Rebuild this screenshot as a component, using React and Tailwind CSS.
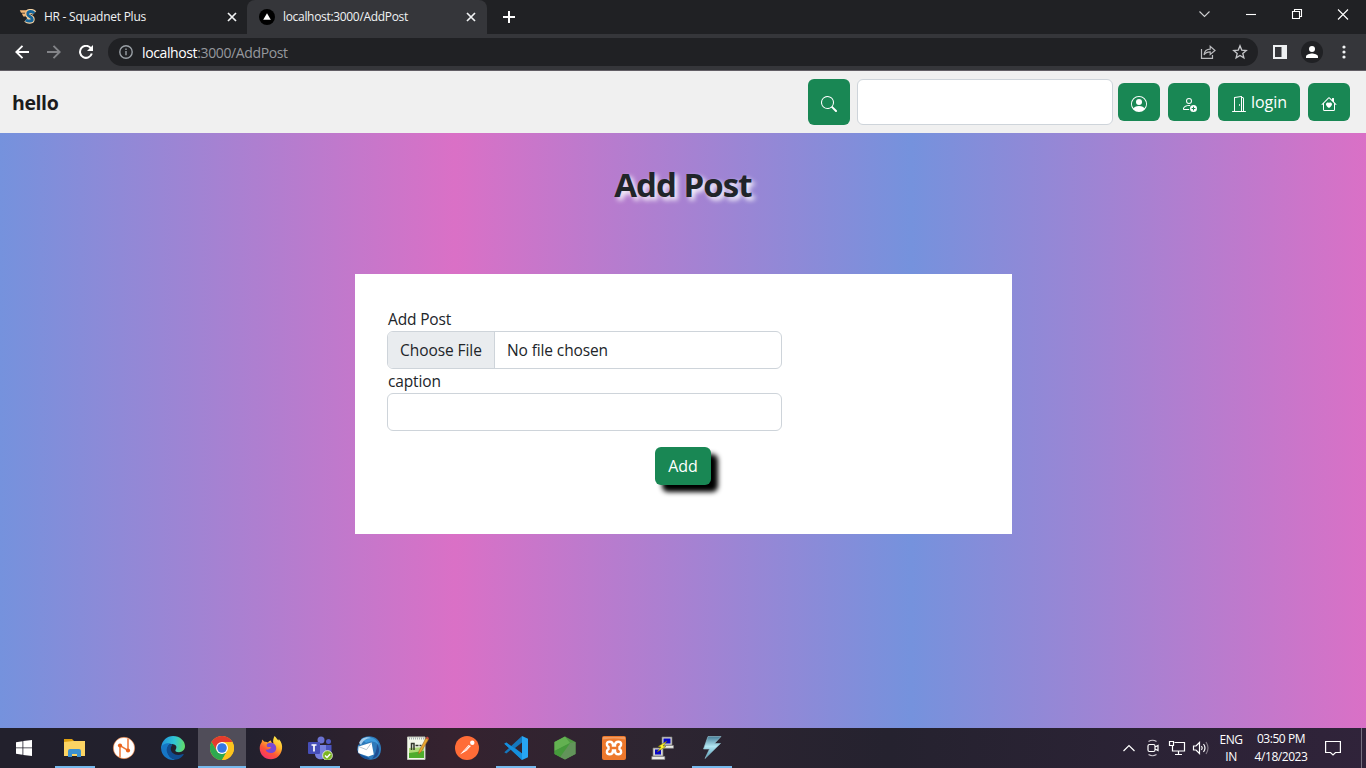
import React from "react";
import { BsSearch, BsPersonCircle, BsPersonAdd, BsDoorOpen, BsHouseHeart } from "react-icons/bs";

const GREEN_BTN = "flex h-[38px] items-center justify-center rounded-md bg-[#198754] text-white";

function Cross({ className }) {
  return (
    <svg viewBox="0 0 10 10" className={className} fill="none" stroke="currentColor" strokeWidth="1.7">
      <path d="M1 1l8 8M9 1L1 9" />
    </svg>
  );
}

function TabStrip() {
  return (
    <div className="flex h-[34px] bg-[#202124] text-[12px] text-[#f1f3f4]">
      <div className="flex w-[247px] items-center rounded-br-lg pl-[19px]">
        <svg viewBox="0 0 18 16" className="h-4 w-[18px] shrink-0">
          <path d="M15.500 4C13 1.600 8.500 1.800 8.500 5C8.500 8.200 13.200 7.200 13.200 10.200C13.200 12.700 9.200 12.800 6.800 10.900" fill="none" stroke="#f5d3a4" strokeWidth="5" />
          <path d="M15.300 4.200C13 1.800 8.700 2 8.700 5C8.700 8.200 13.200 7.200 13.200 10.200C13.200 12.700 9.200 12.500 6.800 10.900" fill="none" stroke="#15659b" strokeWidth="3" />
          <path d="M.8 1.300H9L7 3.800H2zM2.800 4.500H7.500L6.500 7.500H4.300z" fill="#f3b877" />
        </svg>
        <span className="ml-[7px] w-[183px] tracking-[-0.25px]">HR - Squadnet Plus</span>
        <Cross className="h-[10px] w-[10px]" />
      </div>
      <div className="flex w-[240px] items-center rounded-t-lg bg-[#35363a] pl-[12px]">
        <svg viewBox="0 0 16 16" className="h-4 w-4 shrink-0">
          <circle cx="8" cy="8" r="8" fill="#000" />
          <path d="M8 4.300L11.800 10.800H4.200z" fill="#fff" />
        </svg>
        <span className="ml-2 w-[183px] tracking-[-0.32px]">localhost:3000/AddPost</span>
        <Cross className="h-[10px] w-[10px]" />
      </div>
      <div className="flex flex-1 items-center">
        <svg viewBox="0 0 12 12" className="ml-4 h-3 w-3" fill="none" stroke="#fff" strokeWidth="2">
          <path d="M6 0v12M0 6h12" />
        </svg>
        <svg viewBox="0 0 150 12" className="mr-[17px] mb-[6px] ml-auto h-3 w-[150px]" fill="none" stroke="#fff" strokeWidth="1.100">
          <path d="M.5 3.500L5.500 8.500L10.500 3.500" stroke="#d0d1d3" />
          <path d="M47 6.500h10" />
          <path d="M93.500 3.500h7v7h-7zM95.500 3.500v-2h7v7h-2" />
          <path d="M139 1.500l10 10M149 1.500l-10 10" />
        </svg>
      </div>
    </div>
  );
}

function Toolbar() {
  return (
    <div className="flex h-[37px] items-start border-b border-[#625e65] bg-[#35363a] pt-1">
      <div className="flex h-7 items-center pl-[15px]">
        <svg viewBox="0 0 14 14" className="h-[14px] w-[14px]" fill="none" stroke="#fff" strokeWidth="1.900">
          <path d="M14 7H1.500M7.500 .8L1.300 7L7.500 13.200" />
        </svg>
        <svg viewBox="0 0 14 14" className="ml-[18px] h-[14px] w-[14px]" fill="none" stroke="#838488" strokeWidth="1.900">
          <path d="M0 7H12.500M6.500 .8L12.700 7L6.500 13.200" />
        </svg>
        <svg viewBox="0 0 14 14" className="ml-[18px] h-[14px] w-[14px]" fill="none" stroke="#fff" strokeWidth="2">
          <path d="M11.800 3.200A6 6 0 1 0 12.800 8.500" />
          <path d="M14 0V6H8z" fill="#fff" stroke="none" />
        </svg>
      </div>
      <div className="ml-[15px] flex h-7 w-[1150px] items-center rounded-full bg-[#202124] pl-[11px]">
        <svg viewBox="0 0 14 14" className="h-[14px] w-[14px]" fill="none" stroke="#9aa0a6" strokeWidth="1.400">
          <circle cx="7" cy="7" r="6.200" />
          <path d="M7 6v4.300M7 3.500v1.500" />
        </svg>
        <span className="ml-[9px] text-[14px] tracking-[-0.38px] text-[#95989d]">
          <span className="text-white">localhost</span>:3000/AddPost
        </span>
        <svg viewBox="0 0 16 14" className="ml-auto h-[14px] w-4" fill="none" stroke="#b9babd" strokeWidth="1.200">
          <path d="M1.500 4V13.300H12.500V10" />
          <path d="M4 9.800C4.500 6 6.500 4.200 10.200 4.200V1.300L15 5.500L10.200 9.500V6.800C7.500 6.800 5.500 7.500 4 9.800z" />
        </svg>
        <svg viewBox="0 0 24 24" className="mr-[10px] ml-4 h-4 w-4" fill="none" stroke="#c5c6c9" strokeWidth="2">
          <path d="M12 2.800l2.600 6.300 6.800.6-5.200 4.500 1.600 6.700L12 17.300l-5.800 3.600 1.600-6.700L2.600 9.700l6.800-.6z" />
        </svg>
      </div>
      <div className="flex h-7 items-center">
        <svg viewBox="0 0 14 14" className="ml-[15px] h-[14px] w-[14px]">
          <path d="M0 0h14v14H0zM2 2v10h6.500V2z" fill="#eef0f2" fillRule="evenodd" />
        </svg>
        <svg viewBox="0 0 22 22" className="ml-[14px] h-[22px] w-[22px]">
          <circle cx="11" cy="11" r="11" fill="#202124" />
          <circle cx="11" cy="8" r="3" fill="#fff" />
          <path d="M5 17v-1.500c0-2 4-3 6-3s6 1 6 3V17z" fill="#fff" />
        </svg>
        <svg viewBox="0 0 4 14" className="ml-[19px] h-[14px] w-1" fill="#f1f3f4">
          <circle cx="2" cy="2" r="1.600" />
          <circle cx="2" cy="7" r="1.600" />
          <circle cx="2" cy="12" r="1.600" />
        </svg>
      </div>
    </div>
  );
}

function Navbar() {
  return (
    <header className="flex h-[62px] items-center bg-[#f0f0f0] pr-4 pl-3">
      <span className="pt-[2px] text-[19.500px] font-bold tracking-[-0.4px] text-[#1b1c1d]">hello</span>
      <button className="ml-auto flex h-[46px] w-[42px] items-center justify-center rounded-md bg-[#198754] text-white">
        <BsSearch className="mt-1 h-4 w-4" />
      </button>
      <input className="mr-[5px] ml-[7px] h-[46px] w-[256px] rounded-md border border-[#ced4da] bg-white" />
      <button className={`${GREEN_BTN} w-[42px]`}>
        <BsPersonCircle className="mt-1 h-4 w-4" />
      </button>
      <button className={`${GREEN_BTN} ml-2 w-[42px]`}>
        <BsPersonAdd className="mt-1 h-4 w-4" />
      </button>
      <button className={`${GREEN_BTN} ml-2 w-[82px] text-[16px]`}>
        <BsDoorOpen className="mt-1 h-4 w-4" />
        <span className="ml-1">login</span>
      </button>
      <button className={`${GREEN_BTN} ml-2 w-[42px]`}>
        <BsHouseHeart className="mt-1 h-4 w-4" />
      </button>
    </header>
  );
}

function PostForm() {
  return (
    <main className="flex h-[595px] flex-col items-center bg-[linear-gradient(to_right,#7592dd,#da70c6,#7592dd,#da70c6)] text-[#212529]">
      <h1 className="mt-[31px] text-[33px] leading-[42px] font-bold tracking-[-0.95px] [text-shadow:3px_3px_5px_white]">Add Post</h1>
      <form className="mt-[68px] ml-px flex h-[260px] w-[657px] flex-col bg-white px-8 pt-[33px] text-[15.500px] leading-6">
        <label className="h-6 pl-px tracking-[-0.15px]">Add Post</label>
        <div className="flex h-[38px] w-[395px] items-center overflow-hidden rounded-md border border-[#ced4da]">
          <span className="flex h-full w-[107px] items-center border-r border-[#ced4da] bg-[#e9ecef] pl-3 tracking-[-0.07px]">Choose File</span>
          <span className="ml-3 tracking-[-0.12px]">No file chosen</span>
        </div>
        <label className="h-6 pl-px tracking-[-0.15px]">caption</label>
        <input className="h-[38px] w-[395px] rounded-md border border-[#ced4da]" />
        <button type="button" className="mt-4 ml-[268px] h-[38px] w-14 rounded-md bg-[#198754] text-[16px] text-white shadow-[7px_7px_5px_black]">
          Add
        </button>
      </form>
    </main>
  );
}

function Explorer() {
  return (
    <svg viewBox="0 0 24 24" className="h-6 w-6">
      <path d="M1 3h8l2 2h11v3H1z" fill="#dfa00f" />
      <path d="M1 6l9-1h12v15H1z" fill="#fcd463" />
      <path d="M5 15q0-2 2-2h9q2 0 2 2v6h-4v-3H9v3H5z" fill="#3c91d0" />
    </svg>
  );
}

function NoteCircle() {
  return (
    <svg viewBox="0 0 24 24" className="h-6 w-6">
      <circle cx="12" cy="12" r="10.700" fill="#fff" stroke="#f4772c" strokeWidth=".6" />
      <path d="M8 21.500V9.500L16 14.500V2.500" fill="none" stroke="#ee7634" strokeWidth="1.500" />
      <circle cx="8" cy="9.500" r="2.100" fill="#ea631c" />
      <circle cx="16" cy="14.500" r="2.100" fill="#ea631c" />
    </svg>
  );
}

function Edge() {
  return (
    <svg viewBox="0 0 24 24" className="h-6 w-6">
      <defs>
        <linearGradient id="edgeTop" x1="0" y1=".4" x2="1" y2=".5">
          <stop offset="0" stopColor="#2193dc" />
          <stop offset=".55" stopColor="#30c6d5" />
          <stop offset="1" stopColor="#62dc68" />
        </linearGradient>
      </defs>
      <path d="M.2 11C1 4.500 6 0 12 0c7 0 12 5 12 10 0 4-3 6.200-6 6.200-3 0-4.200-1-3.500-2.200 2.500-4-.5-6-4-6C6 8 2.500 9.500.2 13z" fill="url(#edgeTop)" />
      <path d="M.1 12C1 8 6 6.500 10 7.700c-3 1-4 4-3.500 7 .6 5 4 8.300 8.500 8.800C8 25.500 0 20 .1 12z" fill="#1676c5" />
      <path d="M10.500 8c-4 1-5.500 4.500-4.500 8 1.500 5.500 6 7.800 9.500 7.500 3-.5 5.700-2.300 7.200-5-.2-.7-.6-.6-1.500-.2C15 20.500 9.500 17 9.800 12.800c0-2 .8-3 1.900-4z" fill="#104d91" />
    </svg>
  );
}

function Chrome() {
  return (
    <svg viewBox="0 0 24 24" className="h-6 w-6">
      <circle cx="12" cy="12" r="12" fill="#fbc116" />
      <path d="M1.600 6A12 12 0 0 1 22.400 6H12L6.800 15z" fill="#e33b2e" />
      <path d="M1.600 6A12 12 0 0 0 12 24L17.200 15L12 18L6.800 15z" fill="#2da94f" />
      <path d="M12 6H22.400A12 12 0 0 1 12 24L17.200 15z" fill="#fcc31e" />
      <circle cx="12" cy="12" r="6" fill="#fff" />
      <circle cx="12" cy="12" r="4.800" fill="#3478e5" />
    </svg>
  );
}

function Firefox() {
  return (
    <svg viewBox="0 0 24 24" className="h-6 w-6">
      <defs>
        <linearGradient id="fox" x1=".8" y1="0" x2=".2" y2="1">
          <stop offset="0" stopColor="#fff04c" />
          <stop offset=".35" stopColor="#ffb52b" />
          <stop offset=".65" stopColor="#ff5636" />
          <stop offset="1" stopColor="#f12b73" />
        </linearGradient>
      </defs>
      <path d="M15.500 0c2 2 2.500 3 4 4.500l.3-1.500c3 3.500 3.700 6.500 3.200 10C22 19.500 17.500 23.300 12 23.300 5.500 23.300.7 18.500.7 12.300c0-3 1-4.800 2.100-6.300L3 3.500l2.500 2.200c1.500-.2 2.500.2 3.500.8C10 5 11 4.600 12 4.500c0 1.500.7 2.500 2.500 3C13.500 5 14.500 2 15.500 0z" fill="url(#fox)" />
      <path d="M8 8c3-2.500 8-1.500 9 2.500 1 4-1.500 6.500-5 6.500-3 0-5-1.500-5.400-3.500 2 .8 3.500-.2 5-1.200.6-.5.4-1-.5-1.200L8.500 11C7.500 10 7.500 9 8 8z" fill="#7849d3" />
    </svg>
  );
}

function Teams() {
  return (
    <svg viewBox="0 0 26 24" className="h-6 w-[26px]">
      <circle cx="14" cy="4" r="3.500" fill="#6c72d2" />
      <circle cx="21.500" cy="5.500" r="2.500" fill="#525ac3" />
      <path d="M17 9h7.500v8c0 3-3 4-5 3z" fill="#4c55bf" />
      <path d="M8 9h11v9c0 7-11 7-11 0z" fill="#7780df" />
      <rect x="1" y="6" width="12" height="12" rx="1" fill="#464eb8" />
      <path d="M4.500 9h5M7 9v6.500" stroke="#fff" strokeWidth="1.700" fill="none" />
      <circle cx="20.500" cy="19.500" r="4.900" fill="#7cb521" stroke="#f1f5ec" strokeWidth=".8" />
      <path d="M18 19.500l2 2 3.200-3.500" stroke="#fff" strokeWidth="1.500" fill="none" />
    </svg>
  );
}

function Thunderbird() {
  return (
    <svg viewBox="0 0 24 24" className="h-6 w-6">
      <path d="M4 3C9-1 16-.5 20 3c6 6 5 16-1 19.500-4 2-10 1.500-14-2L0 14l1-5 2-1z" fill="#2e79b9" />
      <path d="M5 3c7-4 15-1 17 6-4-4-8-4.500-13-2z" fill="#3f9bdd" />
      <path d="M2 7C4 2 10 0 14 2 9 2 6 5 4 9z" fill="#a6cdec" />
      <path d="M20 8c4 6 2 13-5 15 3-4 5-9 5-15z" fill="#204d91" />
      <path d="M1.500 10.500L14.500 6.500l2.300 12-5.500 2L1 17z" fill="#fff" />
      <path d="M1.500 10.500l8 3.200 5-7" fill="none" stroke="#a7b7c4" strokeWidth=".8" />
      <path d="M0 12l1 5.500 10 4 2 1.500C6 24 1 19 0 12z" fill="#16539b" />
    </svg>
  );
}

function NotepadPlus() {
  return (
    <svg viewBox="0 0 24 24" className="h-6 w-6">
      <path d="M1.500 1h17.500v22.500H1.500z" fill="#f3f8ea" stroke="#bfc4b9" />
      <path d="M3 15h15v7H3z" fill="#4ead2b" />
      <path d="M3 12l15-1v4L3 17z" fill="#afdc76" />
      <path d="M3 2.500h15" stroke="#a6adb2" strokeWidth="2" strokeDasharray="1 1" />
      <path d="M5.500 14V7.500h2.500V14" fill="none" stroke="#32382c" strokeWidth="1.500" />
      <path d="M9.500 9.500h3M13.500 9.500h2" stroke="#32382c" strokeWidth="1.500" />
      <path d="M20 2l2.500 1.500L15 16l-2.500 2 .5-3z" fill="#e8a430" stroke="#91611d" strokeWidth=".5" />
      <path d="M20 2l1-1.500L23 2l-.7 1.500z" fill="#d34b40" />
    </svg>
  );
}

function Postman() {
  return (
    <svg viewBox="0 0 24 24" className="h-6 w-6">
      <circle cx="12" cy="12" r="12" fill="#ff6c37" />
      <circle cx="17.300" cy="6.700" r="2.200" fill="#fff" />
      <path d="M5 18.500l8.500-9.500 2.500 1-4 4.500z" fill="#fff" />
      <path d="M9 14.500l5.500-5M10.500 15l5-4.300" stroke="#ff8e66" strokeWidth=".6" />
    </svg>
  );
}

function VSCode() {
  return (
    <svg viewBox="0 0 24 24" className="h-6 w-6">
      <path d="M18 0L6.900 10.200 2.300 6.600.3 7.700 5 12 .3 16.300l2 1.100 4.600-3.600L18 24v-6.500L11 12l7-5.500z" fill="#1577bd" />
      <path d="M.3 7.700l2-1.100L18 17.500V24z" fill="#168fdd" />
      <path d="M18 0l6 2.700v18.600L18 24z" fill="#27a5f3" />
    </svg>
  );
}

function NodeGem() {
  return (
    <svg viewBox="0 0 24 24" className="h-6 w-6">
      <path d="M12 .5l10.500 5.500v12L12 23.500 1.500 18V6z" fill="#509943" />
      <path d="M12 .5L1.500 6v9L17 7z" fill="#63b151" />
      <path d="M17 7l5.500-1v12L12 23.500 7 21z" fill="#62945a" />
      <path d="M1.500 15L17 7 7 21l-5.500-3z" fill="#469a3c" />
    </svg>
  );
}

function Xampp() {
  return (
    <svg viewBox="0 0 24 24" className="h-6 w-6">
      <rect width="24" height="24" rx="2" fill="#ed782c" />
      <path d="M1 1h22v2.500q-11-2-22 0z" fill="#f29b61" />
      <path d="M7.500 5.700c-3 0-3.700 3.500-1 5.300v2c-2.700 1.800-2 5.300 1 5.300 2.500 0 3.500-2 3.500-3.800h2c0 1.800 1 3.800 3.500 3.800 3 0 3.700-3.500 1-5.300v-2c2.700-1.800 2-5.300-1-5.300-2.500 0-3.500 2-3.500 3.800h-2c0-1.800-1-3.800-3.500-3.800z" fill="none" stroke="#fff" strokeWidth="2.400" />
    </svg>
  );
}

function Putty() {
  return (
    <svg viewBox="0 0 24 24" className="h-6 w-6">
      <path d="M11 1h10v8H11zM2 12h10v8H2z" fill="#d6d6d1" stroke="#777" strokeWidth=".7" />
      <path d="M12.500 2.500h7v5h-7zM4 13.500h6v5H4z" fill="#0808c8" />
      <path d="M10 9.500h12.500v2.700H10zM.8 20.500h13v3H.8z" fill="#eeeee9" stroke="#888" strokeWidth=".6" />
      <path d="M16 5l-9 5.500 3 .5-4 5 9-5.500-3-.5z" fill="#fff32b" stroke="#655e00" strokeWidth=".5" />
    </svg>
  );
}

function Bolt() {
  return (
    <svg viewBox="0 0 24 24" className="h-6 w-6">
      <defs>
        <linearGradient id="bolt" x1="0" y1="0" x2="0" y2="1">
          <stop offset="0" stopColor="#477f98" />
          <stop offset=".45" stopColor="#b3e6f2" />
          <stop offset="1" stopColor="#4897b5" />
        </linearGradient>
      </defs>
      <path d="M8 .5H21L14.500 7.500H20.500L5 22.500L9.500 13H3.500z" fill="url(#bolt)" stroke="#9bcbd8" strokeWidth=".6" />
    </svg>
  );
}

const APPS = [
  { Icon: Explorer, state: "open" },
  { Icon: NoteCircle },
  { Icon: Edge },
  { Icon: Chrome, state: "active" },
  { Icon: Firefox },
  { Icon: Teams, state: "open" },
  { Icon: Thunderbird },
  { Icon: NotepadPlus },
  { Icon: Postman },
  { Icon: VSCode, state: "open" },
  { Icon: NodeGem },
  { Icon: Xampp },
  { Icon: Putty },
  { Icon: Bolt, state: "open" },
];

function AppButton({ Icon, state }) {
  return (
    <div className={`flex h-10 w-12 flex-col items-center ${state === "active" ? "bg-[#504d59]" : ""}`}>
      <div className="flex h-[38px] items-center pt-[2px]">
        <Icon />
      </div>
      {state && <div className={`h-[2px] bg-[#76b9ed] ${state === "active" ? "w-12" : "w-10"}`} />}
    </div>
  );
}

function Taskbar() {
  return (
    <footer className="flex h-10 items-center bg-[linear-gradient(to_right,#22202c_0%,#22202d_18%,#35222f_33%,#2d2531_48%,#25222f_65%,#30233a_100%)] text-white">
      <div className="flex w-[51px] justify-start pl-4">
        <svg viewBox="0 0 16 16" className="h-4 w-4" fill="#fff">
          <path d="M0 2.200L6.500 1.200V7.500H0zM7.300 1.100L16 0V7.500H7.300zM0 8.300H6.500V14.700L0 13.800zM7.300 8.300H16V16L7.300 14.900z" />
        </svg>
      </div>
      <div className="flex gap-px">
        {APPS.map((app, i) => (
          <AppButton key={i} {...app} />
        ))}
      </div>
      <svg viewBox="0 0 90 18" className="mr-[7px] ml-auto h-[18px] w-[90px]" fill="none" stroke="#fff" strokeWidth="1.200">
        <path d="M3.500 12L9 6.500L14.500 12" />
        <path d="M29.500 5.500h4q1.500 0 1.500 1.500v4q0 1.500-1.500 1.500h-4q-1.500 0-1.500-1.500V7q0-1.500 1.500-1.500zM35 8l3-1.500v5L35 10" />
        <path d="M28.500 2.500q4-2.500 8 0M28.500 15.500q4 2.500 8 0" stroke="#c9c4cc" />
        <path d="M54.500 3.500h10v8.500H52.500V7M58.500 12v3.500M55 15.500h7M49.500 2.500h4v4h-4z" />
        <path d="M73.500 7h2.500l3.500-3.500v11L76 11h-2.500zM81.500 7q1.500 2 0 4M83.500 5q3 4 0 8" />
        <path d="M86 3q4 6 0 12" stroke="#817985" />
      </svg>
      <div className="w-7 text-center text-[12px] leading-[17px] tracking-[-0.4px]">
        <div>ENG</div>
        <div>IN</div>
      </div>
      <div className="ml-[6px] w-[60px] text-center text-[12px] leading-[17px] tracking-[-0.45px] whitespace-nowrap">
        <div className="-mt-px">03:50 PM</div>
        <div className="mt-px">4/18/2023</div>
      </div>
      <svg viewBox="0 0 16 17" className="ml-[14px] h-[17px] w-4" fill="none" stroke="#fff" strokeWidth="1.200">
        <path d="M.6 1.500H15.400V12.500H10.500L8 15L5.500 12.500H.6z" />
      </svg>
      <div className="mr-1 ml-5 h-10 w-px bg-[#777080]" />
    </footer>
  );
}

export default function App() {
  return (
    <div className="flex h-[768px] w-[1366px] flex-col overflow-hidden font-['Open_Sans','Noto_Sans',sans-serif]">
      <TabStrip />
      <Toolbar />
      <Navbar />
      <PostForm />
      <Taskbar />
    </div>
  );
}
